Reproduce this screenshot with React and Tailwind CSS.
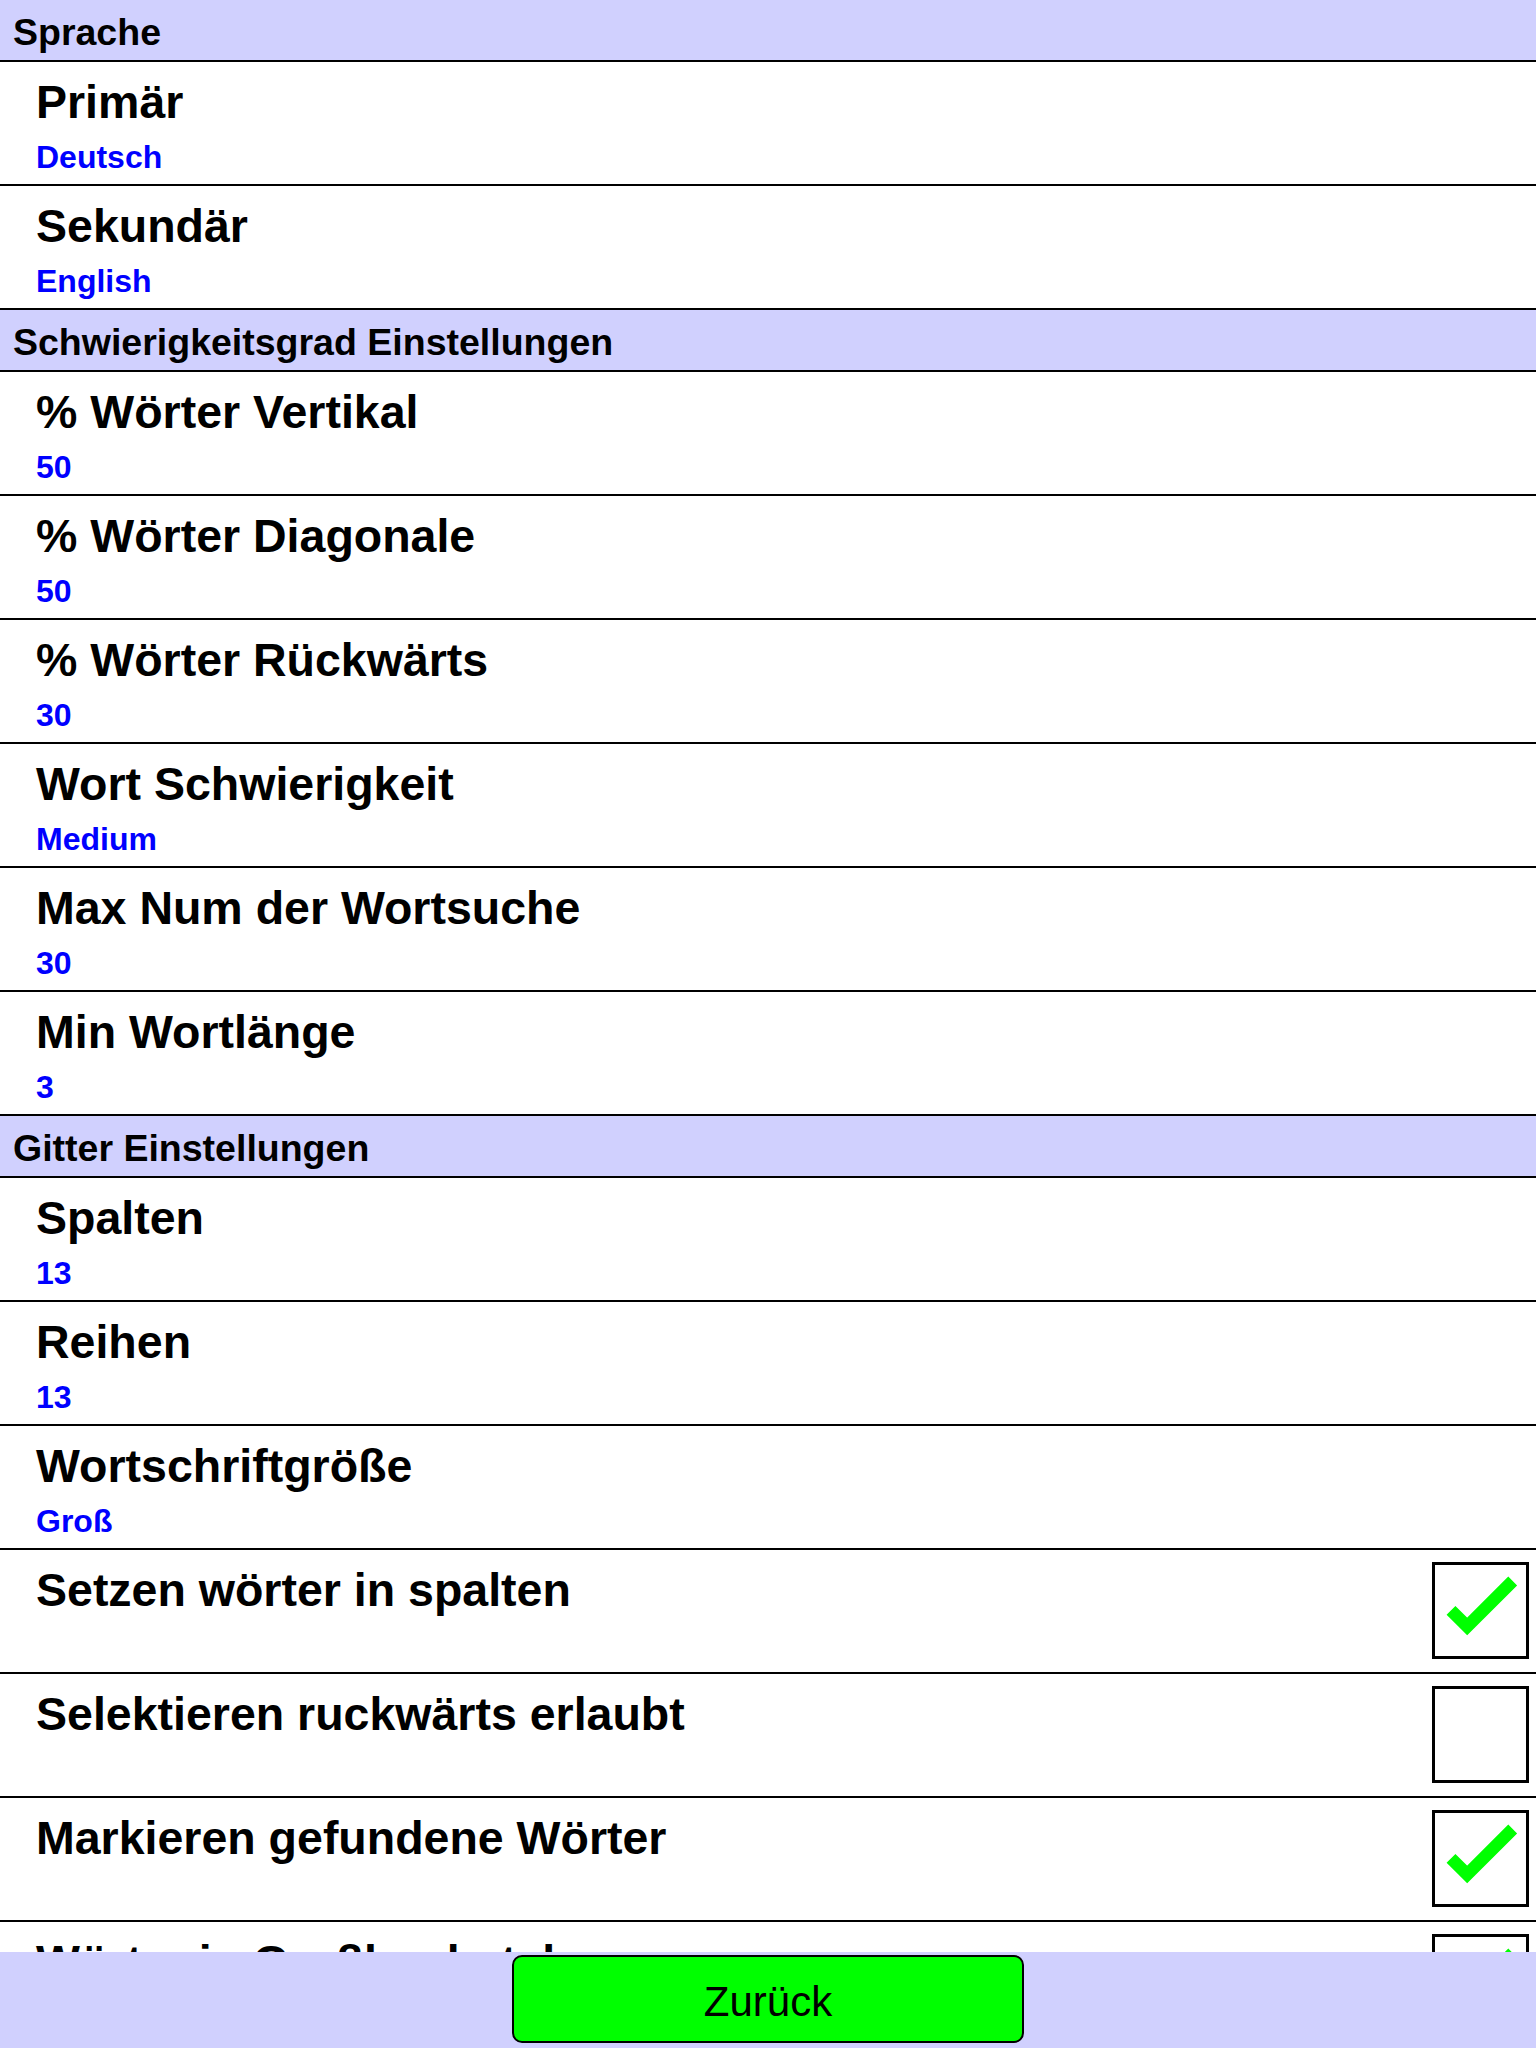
import React from "react";

const font = { fontFamily: '"Liberation Sans", Arial, Helvetica, sans-serif' };

function Header({ children }) {
  return (
    <div className="h-[62px] shrink-0 bg-[#d0d0fe] border-b-2 border-black pl-[13px] pt-[5px] flex items-center">
      <span className="text-[37.5px] font-bold leading-none text-black whitespace-nowrap">{children}</span>
    </div>
  );
}

function Check() {
  return (
    <svg viewBox="0 0 91 91" className="w-full h-full">
      <polyline
        points="16,45.3 32.2,61.5 77.7,16"
        fill="none"
        stroke="#00ff00"
        strokeWidth="12.5"
        strokeLinecap="butt"
        strokeLinejoin="miter"
      />
    </svg>
  );
}

function Row({ title, value, checkbox, checked }) {
  return (
    <div className="h-[124px] shrink-0 bg-white border-b-2 border-black flex items-start justify-between">
      <div className="flex flex-col pl-[36px] pt-[17px]">
        <div className="text-[46.5px] font-bold leading-[46px] text-black whitespace-nowrap">{title}</div>
        {value !== undefined && (
          <div className="mt-[16px] text-[32px] font-bold leading-[32px] text-[#0000ff] whitespace-nowrap">{value}</div>
        )}
      </div>
      {checkbox && (
        <div className="mt-[12px] mr-[7px] w-[97px] h-[97px] border-[3px] border-black bg-white shrink-0">
          {checked && <Check />}
        </div>
      )}
    </div>
  );
}

export default function App() {
  return (
    <div className="w-[1536px] h-[2048px] flex flex-col bg-white overflow-hidden" style={font}>
      <div className="flex-1 flex flex-col overflow-hidden">
        <Header>Sprache</Header>
        <Row title="Primär" value="Deutsch" />
        <Row title="Sekundär" value="English" />
        <Header>Schwierigkeitsgrad Einstellungen</Header>
        <Row title="% Wörter Vertikal" value="50" />
        <Row title="% Wörter Diagonale" value="50" />
        <Row title="% Wörter Rückwärts" value="30" />
        <Row title="Wort Schwierigkeit" value="Medium" />
        <Row title="Max Num der Wortsuche" value="30" />
        <Row title="Min Wortlänge" value="3" />
        <Header>Gitter Einstellungen</Header>
        <Row title="Spalten" value="13" />
        <Row title="Reihen" value="13" />
        <Row title="Wortschriftgröße" value="Groß" />
        <Row title="Setzen wörter in spalten" checkbox checked />
        <Row title="Selektieren ruckwärts erlaubt" checkbox checked={false} />
        <Row title="Markieren gefundene Wörter" checkbox checked />
        <Row title="Wörter in Großbuchstaben" checkbox checked />
      </div>
      <div className="h-[96px] shrink-0 bg-[#d0d0fe] flex justify-center pt-[3px]">
        <button className="w-[512px] h-[88px] bg-[#00ff00] border-2 border-black rounded-[10px] pt-[5px] text-[42px] leading-none text-black font-normal">
          Zurück
        </button>
      </div>
    </div>
  );
}
